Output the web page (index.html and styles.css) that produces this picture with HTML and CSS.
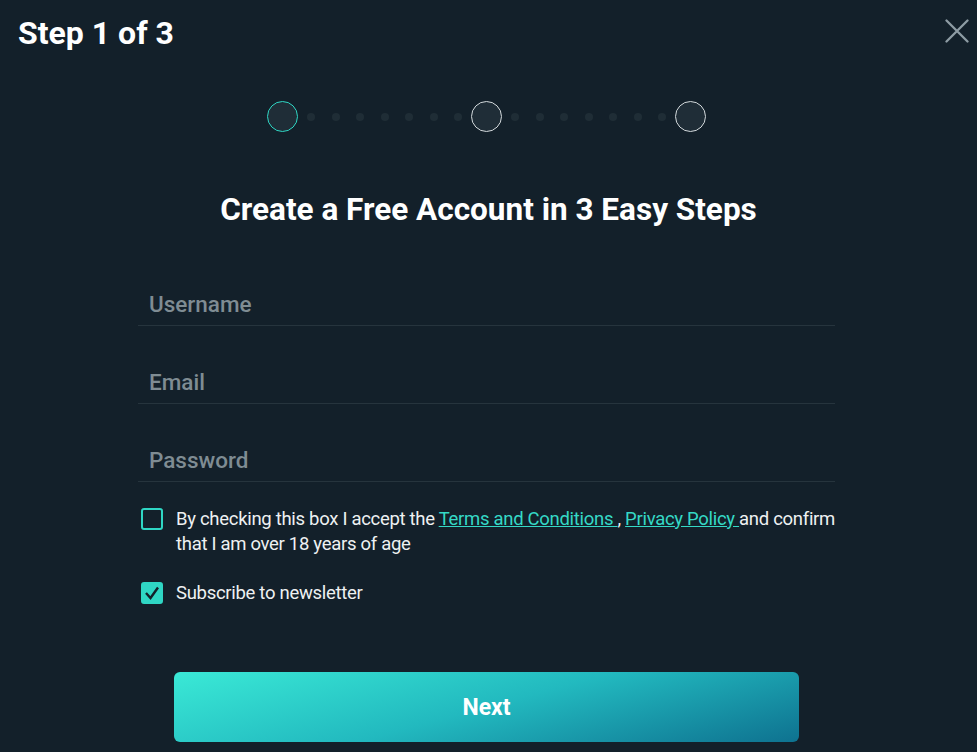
FILE: index.html
```html
<!DOCTYPE html>
<html lang="en">
<head>
  <meta charset="UTF-8">
  <meta name="viewport" content="width=device-width, initial-scale=1.0">
  <title>Create account</title>
  <link rel="stylesheet" href="styles.css">
</head>
<body>
  <div class="modal">
    <header class="top">
      <h2>Step 1 of 3</h2>
      <button class="close" aria-label="Close">
        <svg width="24" height="24" viewBox="0 0 24 24">
          <path d="M1.5 1.5 L22.5 22.5 M22.5 1.5 L1.5 22.5" stroke="#8e9ca4" stroke-width="2.3" stroke-linecap="round"/>
        </svg>
      </button>
    </header>

    <div class="steps">
      <span class="circle active"></span>
      <span class="dot"></span><span class="dot"></span><span class="dot"></span><span class="dot"></span>
      <span class="dot"></span><span class="dot"></span><span class="dot"></span>
      <span class="circle"></span>
      <span class="dot"></span><span class="dot"></span><span class="dot"></span><span class="dot"></span>
      <span class="dot"></span><span class="dot"></span><span class="dot"></span>
      <span class="circle"></span>
    </div>

    <h1>Create a Free Account in 3 Easy Steps</h1>

    <form class="form">
      <input type="text" placeholder="Username">
      <input type="email" placeholder="Email">
      <input type="password" placeholder="Password">

      <label class="check">
        <span class="box"></span>
        <span>By checking this box I accept the <a href="#">Terms and Conditions </a>, <a href="#">Privacy Policy </a>and confirm that I am over 18 years of age</span>
      </label>
      <label class="check news">
        <span class="box on">
          <svg width="16" height="14" viewBox="0 0 16 14">
            <path d="M2 7 L6.5 12 L14 1.5" fill="none" stroke="#13202a" stroke-width="2.4"/>
          </svg>
        </span>
        <span>Subscribe to newsletter</span>
      </label>

      <button type="button" class="next">Next</button>
    </form>
  </div>
</body>
</html>
```

FILE: styles.css
```css
body {
  margin: 0;
  background: #13202a;
  font-family: Roboto, Arial, sans-serif;
  color: white;
}
.modal {
  height: 752px;
  overflow: hidden;
}
.top {
  display: flex;
  justify-content: space-between;
  align-items: center;
  padding: 13px 6px 0 18px;
}
.top h2 {
  margin: 0;
  font-size: 32px;
  font-weight: 700;
  line-height: 40px;
}
.close {
  background: none;
  border: none;
  padding: 0;
  width: 28px;
  height: 28px;
  display: flex;
  align-items: center;
  justify-content: center;
  margin-top: -4px;
}
.steps {
  display: flex;
  justify-content: center;
  align-items: center;
  gap: 16.5px;
  margin-top: 48px;
  padding-right: 4px;
}
.circle {
  width: 29px;
  height: 29px;
  border-radius: 50%;
  border: 1.5px solid #d3d9dc;
  background: #1f2d37;
  margin: 0 -7.5px;
}
.circle.active {
  border-color: #2fd6c4;
}
.dot {
  width: 8px;
  height: 8px;
  border-radius: 50%;
  background: #1f2d36;
}
h1 {
  text-align: center;
  margin: 59px 0 0;
  font-size: 31.5px;
  font-weight: 700;
  line-height: 38px;
}
.form {
  width: 697px;
  margin: 54px 0 0 138px;
  display: flex;
  flex-direction: column;
}
.form input {
  background: none;
  border: none;
  border-bottom: 1px solid #26343d;
  height: 42px;
  padding: 0 11px;
  margin-bottom: 35px;
  font-family: Roboto, Arial, sans-serif;
  font-size: 22.5px;
  font-weight: 500;
  color: white;
  outline: none;
}
.form input:last-of-type {
  margin-bottom: 25px;
}
.form input::placeholder {
  color: #7f8c93;
}
.check {
  display: flex;
  gap: 13px;
  padding-left: 3px;
  font-size: 18.5px;
  line-height: 25px;
  letter-spacing: -0.3px;
  color: #eef1f2;
  margin-right: -6px;
}
.check a {
  color: #35d9c6;
}
.box {
  flex: none;
  width: 18px;
  height: 18px;
  border: 2px solid #2fd6c4;
  border-radius: 3px;
  margin-top: 1px;
  display: flex;
  align-items: center;
  justify-content: center;
}
.box.on {
  background: #2fd6c4;
}
.news {
  margin-top: 24px;
}
.next {
  margin: 66px auto 0;
  width: 625px;
  height: 70px;
  border: none;
  border-radius: 6px;
  background: linear-gradient(165deg, #3ae9d6 0%, #22b9bf 50%, #0e7290 100%);
  color: white;
  font-family: Roboto, Arial, sans-serif;
  font-size: 23px;
  font-weight: 700;
}
```
